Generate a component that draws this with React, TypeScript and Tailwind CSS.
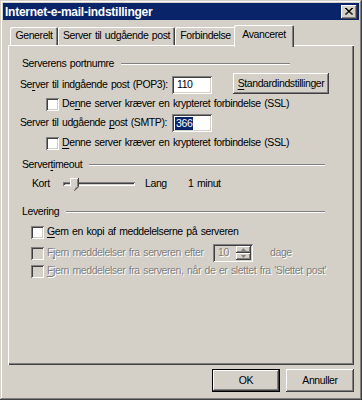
const raised =
  'shadow-[inset_-1px_-1px_0_#404040,inset_1px_1px_0_#ffffff,inset_-2px_-2px_0_#808080,inset_2px_2px_0_#d4d0c8]';
const sunken =
  'shadow-[inset_1px_1px_0_#808080,inset_-1px_-1px_0_#ffffff,inset_2px_2px_0_#404040,inset_-2px_-2px_0_#d4d0c8]';
const disabledText = 'text-[#808080] [text-shadow:1px_1px_0_#ffffff]';

function U({ children }: { children: string }) {
  return <span className="underline underline-offset-[2px] decoration-[1px]">{children}</span>;
}

function Checkbox({ disabled }: { disabled?: boolean }) {
  return <div className={`w-[13px] h-[13px] shrink-0 ${disabled ? 'bg-[#d4d0c8]' : 'bg-white'} ${sunken}`} />;
}

function GroupTitle({ title, lineEnd }: { title: React.ReactNode; lineEnd: string }) {
  return (
    <div className={`flex items-center h-full ml-[14px] ${lineEnd}`}>
      <span className="whitespace-nowrap">{title}</span>
      <div className="flex-1 ml-[7px] h-[2px] border-t border-t-[#808080] border-b border-b-white" />
    </div>
  );
}

function Tab({ label, width, selected }: { label: string; width: string; selected?: boolean }) {
  return (
    <div
      className={`flex items-center justify-center rounded-t-[2px] bg-[#d4d0c8] whitespace-nowrap shadow-[inset_1px_1px_0_#ffffff,inset_-1px_0_0_#404040,inset_-2px_0_0_#808080] ${width} ${
        selected ? 'relative z-10 h-[22px] -mb-[2px] -ml-[2px] pb-[2px]' : 'h-[18px]'
      }`}
    >
      {label}
    </div>
  );
}

export default function App() {
  return (
    <div className="w-[362px] h-[400px] bg-[#d4d0c8] p-[3px] flex flex-col text-[10.5px] tracking-[-0.4px] [word-spacing:1px] text-black font-['Liberation_Sans',Arial,sans-serif] shadow-[inset_-1px_-1px_0_#404040,inset_1px_1px_0_#d4d0c8,inset_-2px_-2px_0_#808080,inset_2px_2px_0_#ffffff]">
      {/* title bar */}
      <div className="h-[17px] bg-[#0a246a] flex items-center justify-between pl-[2px] pr-[2px]">
        <span className="text-white font-bold text-[12px] tracking-[-0.25px] [word-spacing:0px]">Internet-e-mail-indstillinger</span>
        <div className={`w-[16px] h-[14px] flex items-center justify-center bg-[#d4d0c8] ${raised}`}>
          <svg width="8" height="7" viewBox="0 0 8 7">
            <path d="M0 0 L7 6.5 M1 0 L8 6.5 M7 0 L0 6.5 M8 0 L1 6.5" stroke="#000" strokeWidth="1" />
          </svg>
        </div>
      </div>

      <div className="flex-1 flex flex-col px-[5px] pt-[5px]">
        {/* tabs */}
        <div className="flex items-end h-[20px] pl-[2px]">
          <Tab label="Generelt" width="w-[48px]" />
          <Tab label="Server til udgående post" width="w-[117px]" />
          <Tab label="Forbindelse" width="w-[61px]" />
          <Tab label="Avanceret" width="w-[60px]" selected />
        </div>

        {/* panel */}
        <div className="h-[320px] flex flex-col pt-[10px] shadow-[inset_1px_1px_0_#ffffff,inset_-1px_-1px_0_#404040,inset_-2px_-2px_0_#808080]">
          <div className="h-[18px]">
            <GroupTitle title="Serverens portnumre" lineEnd="mr-[64px]" />
          </div>

          <div className="h-[22px] flex items-start">
            <div className="ml-[12px] w-[152px] mt-[5px] leading-[13px] whitespace-nowrap">
              Se<U>r</U>ver til indgående post (POP3):
            </div>
            <div className={`w-[40px] h-[18px] mt-[3px] bg-white flex items-center pl-[5px] ${sunken}`}>110</div>
            <div className={`ml-[21px] w-[96px] h-[21px] flex items-center justify-center ${raised}`}>
              <span>
                <U>S</U>tandardindstillinger
              </span>
            </div>
          </div>

          <div className="h-[18px] flex items-center">
            <div className="ml-[38px] flex items-center gap-[3px]">
              <Checkbox />
              <span className="whitespace-nowrap">
                De<U>n</U>ne server kræver en krypteret forbindelse (SSL)
              </span>
            </div>
          </div>

          <div className="h-[20px] flex items-center">
            <div className="ml-[12px] w-[152px] whitespace-nowrap">
              Server til udgående <U>p</U>ost (SMTP):
            </div>
            <div className={`w-[40px] h-[18px] bg-white flex items-center pl-[3px] ${sunken}`}>
              <span className="bg-[#0a246a] text-white px-[1px] leading-[13px]">366</span>
            </div>
          </div>

          <div className="h-[20px] flex items-center">
            <div className="ml-[38px] flex items-center gap-[3px]">
              <Checkbox />
              <span className="whitespace-nowrap">
                <U>D</U>enne server kræver en krypteret forbindelse (SSL)
              </span>
            </div>
          </div>

          <div className="h-[24px]">
            <GroupTitle
              title={
                <>
                  Server<U>t</U>imeout
                </>
              }
              lineEnd="mr-[29px]"
            />
          </div>

          <div className="h-[14px] flex items-center">
            <div className="ml-[24px] w-[31px]">Kort</div>
            <div className="relative w-[72px] h-[14px]">
              <div className={`absolute left-0 right-0 top-[5px] h-[4px] ${sunken}`} />
              <svg className="absolute left-[7px] top-[1px]" width="9" height="13" viewBox="0 0 9 13">
                <path d="M0.5 0.5 H8 V8.5 L4.5 12 L0.5 8.5 Z" fill="#d4d0c8" />
                <path d="M0.5 8.5 V0.5 H8" stroke="#ffffff" fill="none" />
                <path d="M8.5 0 V8.7 L4.5 12.7" stroke="#404040" fill="none" />
                <path d="M7.5 1 V8.3 L4.5 11.3" stroke="#808080" fill="none" />
              </svg>
            </div>
            <div className="ml-[10px] w-[43px]">Lang</div>
            <div>1 minut</div>
          </div>

          <div className="h-[20px] mt-[11px]">
            <GroupTitle title="Levering" lineEnd="mr-[29px]" />
          </div>

          <div className="h-[20px] flex items-center">
            <div className="ml-[23px] flex items-center gap-[3px]">
              <Checkbox />
              <span className="whitespace-nowrap">
                <U>G</U>em en kopi af meddelelserne på serveren
              </span>
            </div>
          </div>

          <div className="h-[22px] flex items-center">
            <div className="ml-[23px] w-[182px] flex items-center gap-[3px]">
              <Checkbox disabled />
              <span className={`whitespace-nowrap ${disabledText}`}>
                F<U>j</U>ern meddelelser fra serveren efter
              </span>
            </div>
            <div className={`w-[40px] h-[18px] flex items-center justify-between pl-[5px] pr-[2px] ${sunken}`}>
              <span className={disabledText}>10</span>
              <div className="flex flex-col w-[15px] h-[14px]">
                <div className={`flex-1 flex items-center justify-center ${raised}`}>
                  <svg width="5" height="3" viewBox="0 0 5 3">
                    <path d="M2.5 0 L5 3 H0 Z" fill="#808080" />
                  </svg>
                </div>
                <div className={`flex-1 flex items-center justify-center ${raised}`}>
                  <svg width="5" height="3" viewBox="0 0 5 3">
                    <path d="M0 0 H5 L2.5 3 Z" fill="#808080" />
                  </svg>
                </div>
              </div>
            </div>
            <span className={`ml-[17px] ${disabledText}`}>dage</span>
          </div>

          <div className="h-[14px] flex items-center">
            <div className="ml-[23px] flex items-center gap-[3px]">
              <Checkbox disabled />
              <span className={`whitespace-nowrap ${disabledText}`}>
                <U>F</U>jern meddelelser fra serveren, når de er slettet fra 'Slettet post'
              </span>
            </div>
          </div>
        </div>

        {/* buttons */}
        <div className="flex justify-end gap-[6px] mt-[4px]">
          <div className={`w-[68px] h-[23px] flex items-center justify-center border border-black ${raised}`}>OK</div>
          <div className={`w-[68px] h-[23px] flex items-center justify-center ${raised}`}>Annuller</div>
        </div>
      </div>
    </div>
  );
}
